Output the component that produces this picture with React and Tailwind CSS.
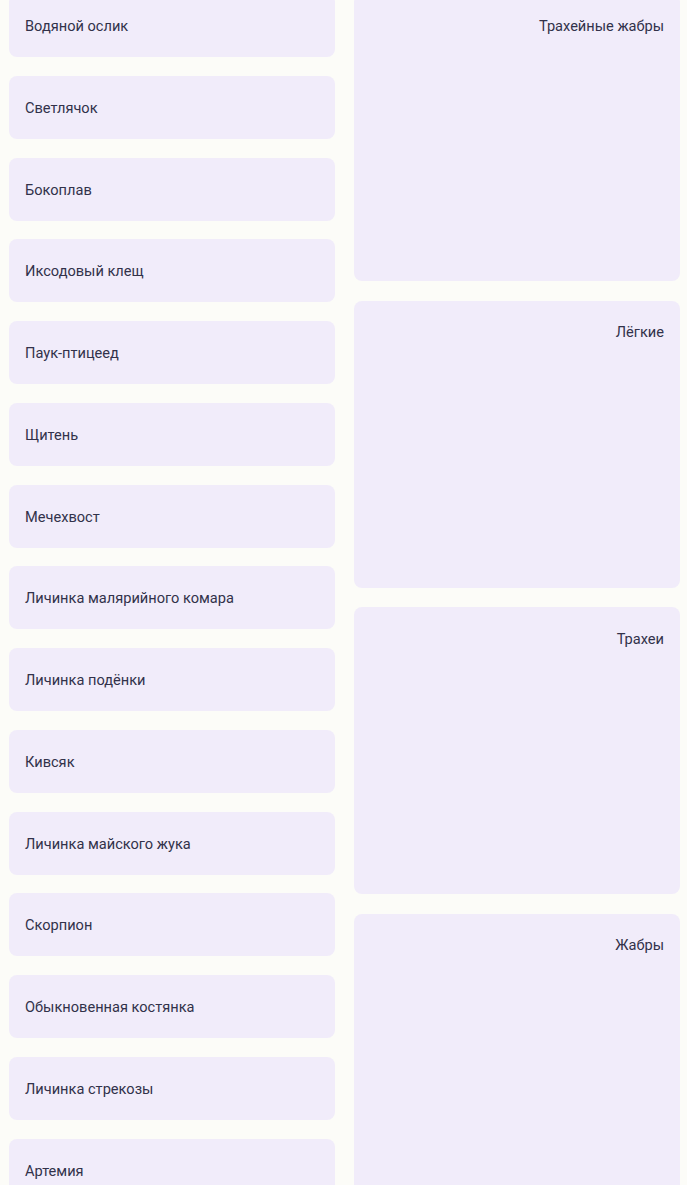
import React from "react";

const animals = [
  "Водяной ослик",
  "Светлячок",
  "Бокоплав",
  "Иксодовый клещ",
  "Паук-птицеед",
  "Щитень",
  "Мечехвост",
  "Личинка малярийного комара",
  "Личинка подёнки",
  "Кивсяк",
  "Личинка майского жука",
  "Скорпион",
  "Обыкновенная костянка",
  "Личинка стрекозы",
  "Артемия",
];

const organs = ["Трахейные жабры", "Лёгкие", "Трахеи", "Жабры"];

const App = () => {
  return (
    <div
      className="h-[1185px] overflow-hidden bg-[#fcfcf8] text-[#32324a]"
      style={{ fontFamily: "Roboto, 'Noto Sans', sans-serif" }}
    >
      <div className="mt-[-6px] grid grid-cols-[326px_326px] gap-x-[19px] pl-[9px]">
        <div className="flex flex-col gap-[18.75px]">
          {animals.map((name) => (
            <div
              key={name}
              className="flex h-[63px] shrink-0 items-center rounded-lg bg-[#f1ecfa] px-4 pt-[3px] text-[14.6px]"
            >
              {name}
            </div>
          ))}
        </div>
        <div className="flex flex-col gap-[19.5px]">
          {organs.map((name) => (
            <div
              key={name}
              className="h-[287px] shrink-0 rounded-lg bg-[#f1ecfa] px-4 pt-[21.5px] text-right text-[14.6px] leading-5"
            >
              {name}
            </div>
          ))}
        </div>
      </div>
    </div>
  );
};

export default App;
